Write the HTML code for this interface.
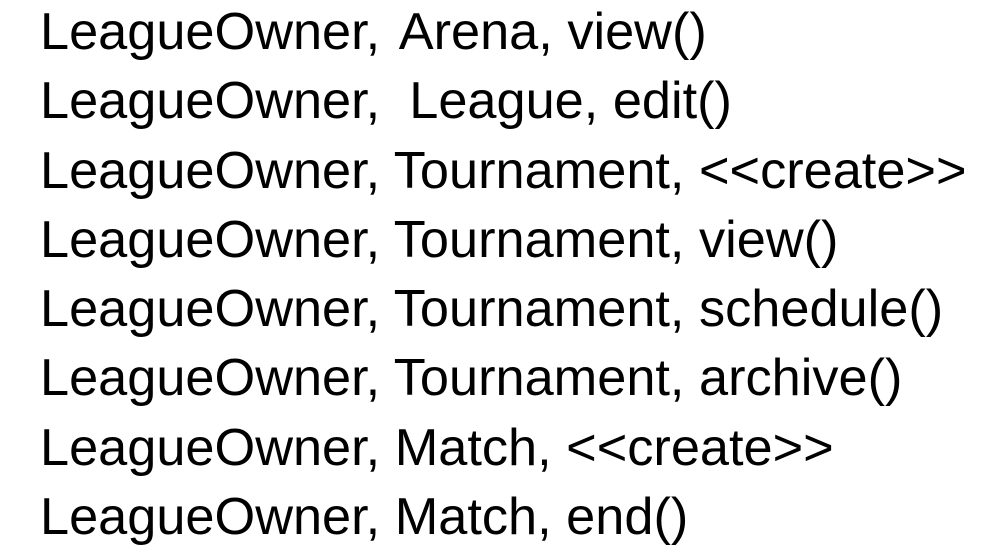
<!DOCTYPE html>
<html><head><style>
html,body{margin:0;padding:0;background:#fff;width:990px;height:548px;overflow:hidden}
.t{position:absolute;left:40px;top:-2px;font-family:"Liberation Sans",Arial,sans-serif;font-size:52.3px;line-height:69.3px;color:#000;white-space:pre}
</style></head><body>
<div class="t">LeagueOwner, <span style="margin-left:4px">Arena, view()</span>
LeagueOwner,  League, edit()
LeagueOwner, Tournament, &lt;&lt;create&gt;&gt;
LeagueOwner, Tournament, view()
LeagueOwner, Tournament, schedule()
LeagueOwner, Tournament, archive()
LeagueOwner, Match, &lt;&lt;create&gt;&gt;
LeagueOwner, Match, end()</div>
</body></html>
